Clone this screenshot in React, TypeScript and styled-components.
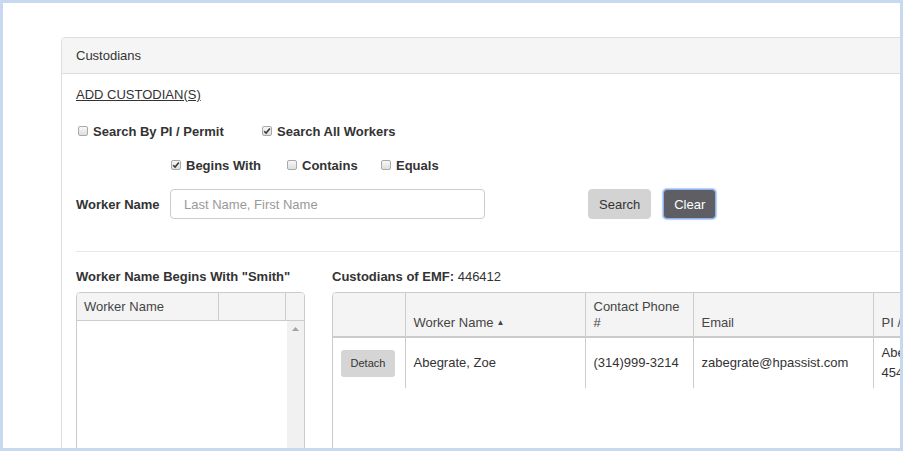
import React from 'react';
import styled, { createGlobalStyle } from 'styled-components';

const GlobalStyle = createGlobalStyle`
  html, body {
    margin: 0;
    padding: 0;
    background: #ffffff;
  }
  body {
    font-family: "Liberation Sans", Arial, sans-serif;
    font-size: 13px;
    color: #333333;
  }
  * {
    box-sizing: border-box;
  }
`;

const Frame = styled.div`
  width: 903px;
  height: 451px;
  border: 3px solid #c6d9f1;
  background: #ffffff;
  overflow: hidden;
  padding: 34px 0 0 58px;
`;

const Panel = styled.section`
  width: 900px;
  height: 500px;
  border: 1px solid #dddddd;
  border-radius: 4px;
`;

const PanelHeader = styled.header`
  height: 36px;
  padding: 0 14px;
  display: flex;
  align-items: center;
  background: #f5f5f5;
  border-bottom: 1px solid #dddddd;
  border-radius: 3px 3px 0 0;
  font-size: 13px;
  color: #333333;
`;

const PanelBody = styled.div`
  padding: 13px 14px 0 14px;
`;

const AddLink = styled.a`
  display: block;
  height: 16px;
  line-height: 16px;
  font-size: 13px;
  color: #333333;
  text-decoration: underline;
  cursor: pointer;
`;

const OptionRow = styled.div<{ $top: number; $indent?: number }>`
  display: flex;
  align-items: center;
  height: 20px;
  margin-top: ${(p) => p.$top}px;
  padding-left: ${(p) => p.$indent ?? 0}px;
`;

const Option = styled.label<{ $width?: number }>`
  display: flex;
  align-items: center;
  gap: 5px;
  width: ${(p) => (p.$width ? `${p.$width}px` : 'auto')};
  font-weight: bold;
  font-size: 13px;
  color: #333333;
`;

const Box = styled.span`
  width: 10px;
  height: 10px;
  border: 1px solid #a9a9a9;
  border-radius: 2px;
  background: linear-gradient(#f7f7f7, #dedede);
  display: flex;
  align-items: center;
  justify-content: center;
  margin-left: 2px;
`;

const Check = ({ checked }: { checked?: boolean }) => (
  <Box>
    {checked && (
      <svg width="8" height="8" viewBox="0 0 8 8">
        <path d="M1.2 4.2 L3.1 6.1 L6.9 1.6" fill="none" stroke="#3a3a3a" strokeWidth="1.6" />
      </svg>
    )}
  </Box>
);

const SearchRow = styled.div`
  display: flex;
  align-items: center;
  height: 30px;
  margin-top: 14px;
`;

const FieldLabel = styled.span`
  width: 94px;
  font-weight: bold;
  font-size: 13px;
`;

const TextInput = styled.input`
  width: 315px;
  height: 30px;
  border: 1px solid #cccccc;
  border-radius: 4px;
  padding: 0 13px;
  font-family: "Liberation Sans", Arial, sans-serif;
  font-size: 13px;
  color: #333333;
  outline: none;

  &::placeholder {
    color: #999999;
  }
`;

const Button = styled.button<{ $dark?: boolean; $left: number }>`
  height: 30px;
  margin-left: ${(p) => p.$left}px;
  padding: 0 10px;
  border-radius: 4px;
  font-family: "Liberation Sans", Arial, sans-serif;
  font-size: 13px;
  background: ${(p) => (p.$dark ? '#5e5e64' : '#d3d3d3')};
  color: ${(p) => (p.$dark ? '#ffffff' : '#333333')};
  border: 1px solid ${(p) => (p.$dark ? '#8fb3f0' : '#d3d3d3')};
  box-shadow: ${(p) => (p.$dark ? '0 0 1px 1px #b9cff5' : 'none')};
`;

const Divider = styled.hr`
  margin: 32px 0 0 0;
  border: 0;
  border-top: 1px solid #e8e8e8;
`;

const Lists = styled.div`
  display: flex;
  gap: 27px;
  margin-top: 17px;
`;

const Column = styled.div<{ $width?: number }>`
  display: flex;
  flex-direction: column;
  width: ${(p) => (p.$width ? `${p.$width}px` : 'auto')};
  flex: ${(p) => (p.$width ? 'none' : '1')};
`;

const Title = styled.div`
  height: 16px;
  line-height: 16px;
  font-size: 13px;
  font-weight: bold;
  margin-bottom: 7px;
  white-space: nowrap;

  span {
    font-weight: normal;
  }
`;

const Grid = styled.div`
  border: 1px solid #cccccc;
  border-radius: 4px 4px 0 0;
  height: 200px;
  display: flex;
  flex-direction: column;
  overflow: hidden;
`;

const GridHead = styled.div`
  display: flex;
  height: 28px;
  background: #f4f4f4;
  border-bottom: 1px solid #cccccc;
`;

const GridHeadCell = styled.div<{ $width: number }>`
  width: ${(p) => p.$width}px;
  padding: 0 7px;
  display: flex;
  align-items: center;
  font-size: 13px;
  color: #444444;
  border-right: 1px solid #cccccc;

  &:last-child {
    border-right: 0;
  }
`;

const GridBody = styled.div`
  flex: 1;
  display: flex;
`;

const GridRows = styled.div`
  flex: 1;
`;

const Scrollbar = styled.div`
  width: 17px;
  background: #f1f1f1;
  display: flex;
  justify-content: center;
  padding-top: 6px;
`;

const TableWrap = styled.div`
  width: 640px;
  height: 200px;
  border: 1px solid #cccccc;
  border-radius: 4px 4px 0 0;
  overflow: hidden;
`;

const Table = styled.table`
  border-collapse: collapse;
  table-layout: fixed;
  width: 640px;
  font-size: 13px;
`;

const Th = styled.th`
  background: #f4f4f4;
  font-weight: normal;
  text-align: left;
  vertical-align: bottom;
  padding: 6px 8px 5px 8px;
  line-height: 16px;
  color: #444444;
  border-left: 1px solid #cccccc;
  border-bottom: 2px solid #cccccc;

  &:first-child {
    border-left: 0;
  }
`;

const NoWrap = styled.span`
  white-space: nowrap;
`;

const Td = styled.td`
  padding: 5px 8px;
  line-height: 20px;
  height: 49px;
  vertical-align: middle;
  color: #333333;
  border-left: 1px solid #cccccc;
  white-space: nowrap;
  overflow: hidden;

  &:first-child {
    border-left: 0;
  }
`;

const SortMark = styled.span`
  font-size: 8px;
  margin-left: 3px;
  vertical-align: 2px;
`;

const SmallButton = styled.button`
  width: 54px;
  height: 27px;
  background: #d5d5d5;
  border: 0;
  border-radius: 3px;
  font-family: "Liberation Sans", Arial, sans-serif;
  font-size: 11px;
  color: #333333;
  padding: 0;
`;

export default function App() {
  return (
    <>
      <GlobalStyle />
      <Frame>
        <Panel>
          <PanelHeader>Custodians</PanelHeader>
          <PanelBody>
            <AddLink>ADD CUSTODIAN(S)</AddLink>

            <OptionRow $top={18}>
              <Option $width={184}>
                <Check />
                Search By PI / Permit
              </Option>
              <Option>
                <Check checked />
                Search All Workers
              </Option>
            </OptionRow>

            <OptionRow $top={14} $indent={93}>
              <Option $width={116}>
                <Check checked />
                Begins With
              </Option>
              <Option $width={94}>
                <Check />
                Contains
              </Option>
              <Option>
                <Check />
                Equals
              </Option>
            </OptionRow>

            <SearchRow>
              <FieldLabel>Worker Name</FieldLabel>
              <TextInput placeholder="Last Name, First Name" />
              <Button $left={103}>Search</Button>
              <Button $dark $left={12}>Clear</Button>
            </SearchRow>

            <Divider />

            <Lists>
              <Column $width={229}>
                <Title>Worker Name Begins With "Smith"</Title>
                <Grid>
                  <GridHead>
                    <GridHeadCell $width={143}>Worker Name</GridHeadCell>
                    <GridHeadCell $width={67} />
                    <GridHeadCell $width={18} />
                  </GridHead>
                  <GridBody>
                    <GridRows />
                    <Scrollbar>
                      <svg width="7" height="4" viewBox="0 0 7 4">
                        <path d="M0 4 L3.5 0 L7 4 Z" fill="#a3a3a3" />
                      </svg>
                    </Scrollbar>
                  </GridBody>
                </Grid>
              </Column>

              <Column>
                <Title>
                  Custodians of EMF: <span>446412</span>
                </Title>
                <TableWrap>
                  <Table>
                    <colgroup>
                      <col style={{ width: 72 }} />
                      <col style={{ width: 180 }} />
                      <col style={{ width: 108 }} />
                      <col style={{ width: 180 }} />
                      <col style={{ width: 100 }} />
                    </colgroup>
                    <thead>
                      <tr>
                        <Th />
                        <Th>
                          Worker Name<SortMark>▲</SortMark>
                        </Th>
                        <Th>Contact Phone #</Th>
                        <Th>Email</Th>
                        <Th>
                          <NoWrap>PI / Permit</NoWrap>
                        </Th>
                      </tr>
                    </thead>
                    <tbody>
                      <tr>
                        <Td>
                          <SmallButton>Detach</SmallButton>
                        </Td>
                        <Td>Abegrate, Zoe</Td>
                        <Td>(314)999-3214</Td>
                        <Td>zabegrate@hpassist.com</Td>
                        <Td>
                          Abegrate
                          <br />
                          4541
                        </Td>
                      </tr>
                    </tbody>
                  </Table>
                </TableWrap>
              </Column>
            </Lists>
          </PanelBody>
        </Panel>
      </Frame>
    </>
  );
}
